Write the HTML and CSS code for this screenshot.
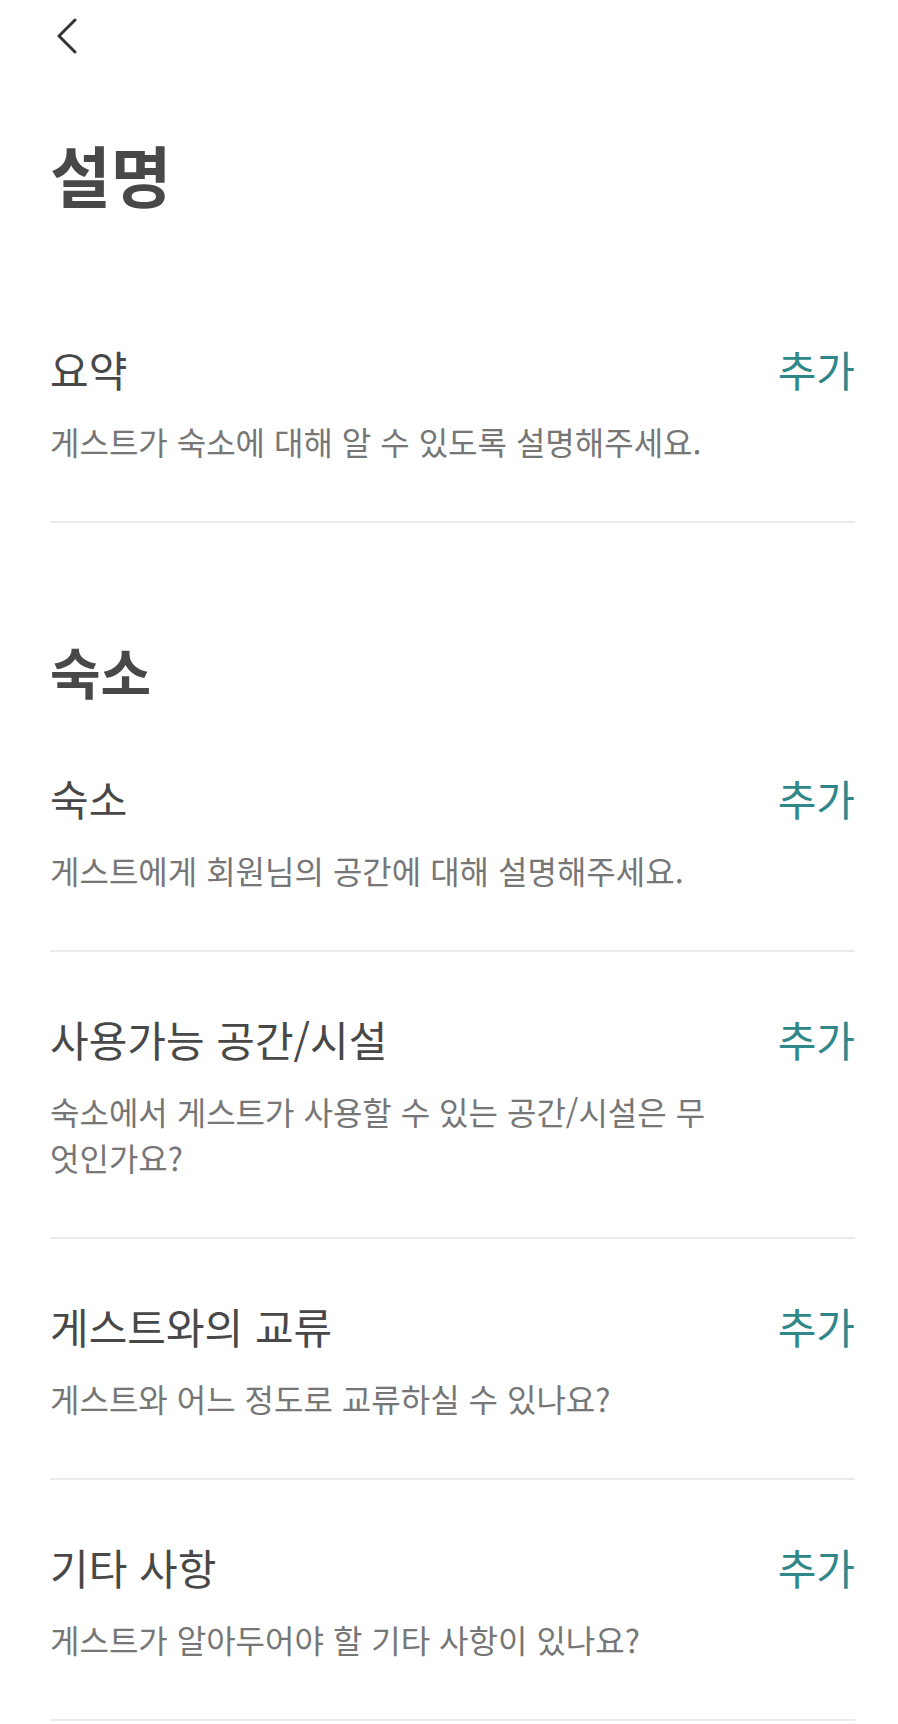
FILE: index.html
```html
<!DOCTYPE html>
<html lang="ko">
<head>
    <meta charset="UTF-8">
    <meta name="viewport" content="width=device-width, initial-scale=1.0">
    <title>설명</title>
    <link rel="stylesheet" href="styles.css">
</head>
<body>
    <div class="page">
        <div class="topbar">
            <button class="back-btn" aria-label="뒤로">
                <svg width="22" height="36" viewBox="0 0 22 36">
                    <path d="M19 2 L3 18 L19 34" fill="none" stroke="#333" stroke-width="3" stroke-linecap="round" stroke-linejoin="round"/>
                </svg>
            </button>
        </div>

        <h1 class="page-title">설명</h1>

        <div class="item first">
            <div class="item-head">
                <span class="item-title">요약</span>
                <a class="item-add" href="#">추가</a>
            </div>
            <p class="item-desc">게스트가 숙소에 대해 알 수 있도록 설명해주세요.</p>
        </div>

        <h2 class="group-title">숙소</h2>

        <div class="item">
            <div class="item-head">
                <span class="item-title">숙소</span>
                <a class="item-add" href="#">추가</a>
            </div>
            <p class="item-desc">게스트에게 회원님의 공간에 대해 설명해주세요.</p>
        </div>
        <div class="item">
            <div class="item-head">
                <span class="item-title">사용가능 공간/시설</span>
                <a class="item-add" href="#">추가</a>
            </div>
            <p class="item-desc">숙소에서 게스트가 사용할 수 있는 공간/시설은 무엇인가요?</p>
        </div>
        <div class="item">
            <div class="item-head">
                <span class="item-title">게스트와의 교류</span>
                <a class="item-add" href="#">추가</a>
            </div>
            <p class="item-desc">게스트와 어느 정도로 교류하실 수 있나요?</p>
        </div>
        <div class="item">
            <div class="item-head">
                <span class="item-title">기타 사항</span>
                <a class="item-add" href="#">추가</a>
            </div>
            <p class="item-desc">게스트가 알아두어야 할 기타 사항이 있나요?</p>
        </div>
    </div>
</body>
</html>
```

FILE: styles.css
```css
body {
    margin: 0;
    background: #fff;
    font-family: "Noto Sans CJK KR", "Noto Sans", sans-serif;
    color: #484848;
}
.page {
    padding: 0 43px 0 50px;
}
.topbar {
    height: 72px;
    display: flex;
    align-items: center;
}
.back-btn {
    margin-left: 6px;
    padding: 0;
    border: 0;
    background: none;
    display: flex;
    cursor: pointer;
}
.page-title {
    margin: 61px 0 0;
    font-size: 66px;
    line-height: 80px;
    font-weight: 700;
}
.group-title {
    margin: 112px 0 6px;
    font-size: 55px;
    line-height: 70px;
    font-weight: 700;
}
.item {
    padding: 62px 0 57px;
    border-bottom: 2px solid #ebebeb;
}
.item.first {
    margin-top: 69px;
}
.item-head {
    display: flex;
    justify-content: space-between;
    align-items: center;
}
.item-title {
    font-size: 42px;
    line-height: 50px;
    color: #484848;
}
.item-add {
    font-size: 42px;
    line-height: 50px;
    color: #2f8789;
    text-decoration: none;
}
.item-desc {
    margin: 24px 0 0;
    max-width: 665px;
    font-size: 32px;
    line-height: 46px;
    color: #767676;
}
```
